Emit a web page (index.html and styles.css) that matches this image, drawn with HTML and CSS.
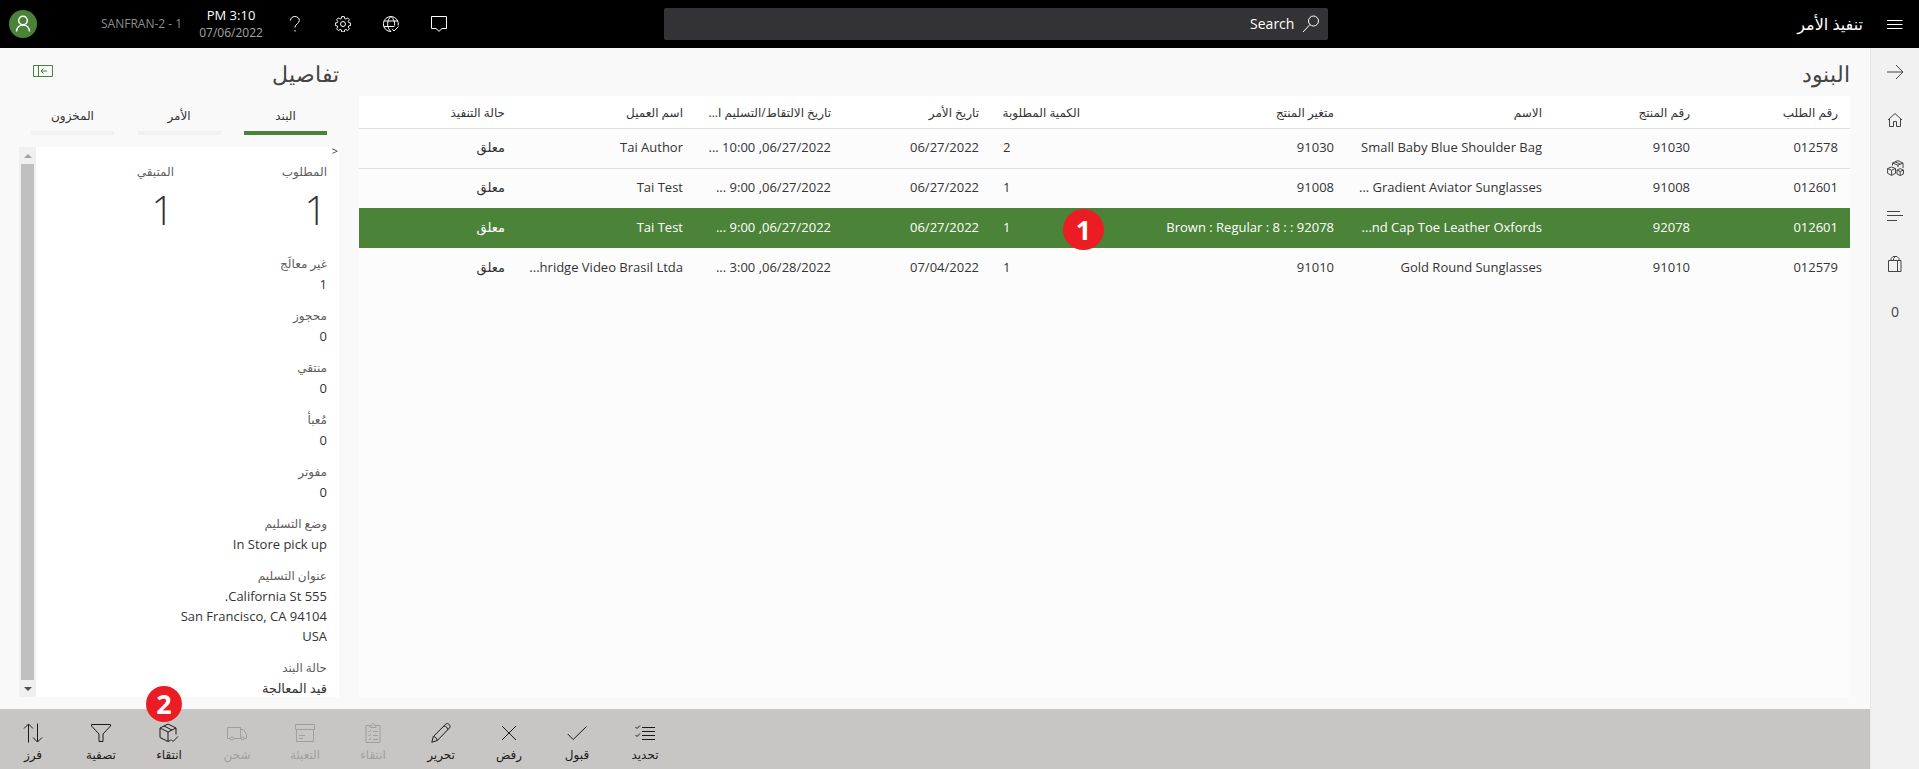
FILE: index.html
```html
<!DOCTYPE html>
<html lang="ar" dir="rtl">
<head>
<meta charset="utf-8">
<title>تنفيذ الأمر</title>
<link rel="stylesheet" href="styles.css">
</head>
<body>
<div class="app">
  <header class="topbar">
    <div class="topbar-start">
      <button class="icon-btn" type="button" aria-label="القائمة">
        <svg width="16" height="16" viewBox="0 0 16 16"><path d="M0 4.500h15.500M0 8.500h15.500M0 12.500h15.500"/></svg>
      </button>
      <h1 class="app-title">تنفيذ الأمر</h1>
    </div>
    <label class="search">
      <svg width="18" height="18" viewBox="0 0 18 18"><circle cx="11.500" cy="6" r="5"/><path d="M8 9.500L1 17"/></svg>
      <input class="search-input" type="text" placeholder="Search" aria-label="Search">
    </label>
    <div class="topbar-end">
      <button class="icon-btn" type="button" aria-label="الرسائل">
        <svg width="16" height="16" viewBox="0 0 16 16"><path d="M.5.5h15v12H11L8 15.300 5 12.500H.5z"/></svg>
      </button>
      <button class="icon-btn" type="button" aria-label="الاتصال">
        <svg width="16" height="16" viewBox="0 0 16 16"><path d="M15.200 9.500A7.500 7.500 0 1 0 8 15.500M8 .5C3.500 4 3.500 12 8 15.500M8 .5c3 2.500 4 6 3.500 9M1.200 5h13.600M.8 10.500h10.500M9 12.800l2 2.200 4.500-4.500"/></svg>
      </button>
      <button class="icon-btn" type="button" aria-label="الإعدادات">
        <svg width="16" height="16" viewBox="0 0 16 16"><circle cx="8" cy="8" r="2.500"/><path d="M6.700.6h2.600l.4 2 1.200.5 1.700-1.200 1.800 1.900-1.200 1.600.5 1.200 2 .4v2.500l-2 .4-.5 1.200 1.200 1.700-1.800 1.800-1.700-1.200-1.200.5-.4 2H6.700l-.4-2-1.200-.5-1.700 1.200-1.800-1.800 1.200-1.700-.5-1.200-2-.4V7l2-.4.5-1.200-1.200-1.600 1.800-1.900 1.700 1.200 1.200-.5z"/></svg>
      </button>
      <button class="icon-btn" type="button" aria-label="تعليمات">
        <svg width="16" height="16" viewBox="0 0 16 16"><path d="M3.500 4.500c0-2.300 1.800-4 4.300-4s4.500 1.500 4.500 4c0 3-4.300 3.500-4.300 7"/><path d="M8 14v1.600"/></svg>
      </button>
      <div class="clock"><span class="clock-time">3:10 PM</span><span class="clock-date">07/06/2022</span></div>
      <span class="register" dir="ltr">SANFRAN-2 - 1</span>
      <button class="avatar" type="button" aria-label="المستخدم">
        <svg width="16" height="18" viewBox="0 0 16 18"><circle cx="8" cy="5.500" r="4.300"/><path d="M1.500 16.500c.3-4 3-6.500 6.500-6.500s6.200 2.500 6.500 6.500"/></svg>
      </button>
    </div>
  </header>

  <div class="shell">
    <nav class="rail" aria-label="التنقل">
      <a class="rail-item" href="#" aria-label="رجوع"><svg width="17" height="16" viewBox="0 0 17 16"><path d="M0 8h16M9 1l7 7-7 7"/></svg></a>
      <a class="rail-item" href="#" aria-label="الصفحة الرئيسية"><svg width="16" height="16" viewBox="0 0 16 16"><path d="M1 8l7-6.500L15 8M2.500 7v7.500h4v-5h3v5h4V7"/></svg></a>
      <a class="rail-item" href="#" aria-label="المنتجات"><svg width="17" height="16" viewBox="0 0 17 16"><path d="M5.500 3L11 .6 16 3v5M11 5.200L5.500 3v2.500M16 3l-5 2.200v2M8 1.800l5.300 2.300M.6 8.500L4.600 7l3.900 1.500v4.800l-3.900 2.100-4-2.100zM.6 8.500l4 1.700 3.900-1.700M4.600 10.200v5.200M10 10l3.200-1.400L16.400 10v4l-3.200 1.500L10 14zM10 10l3.200 1.500 3.200-1.500M13.200 11.500v4"/></svg></a>
      <a class="rail-item" href="#" aria-label="القوائم"><svg width="16" height="16" viewBox="0 0 16 16"><path d="M0 3.500h13M0 7.500h16M0 12.500h10"/></svg></a>
      <a class="rail-item" href="#" aria-label="السلة"><svg width="14" height="16" viewBox="0 0 14 16"><path d="M.5 4.500h12.500v11H.5zM9.500 4.500v11M3 4.500v-2l2-2h4l2 2v2M5.500 4.500v-2l2-2"/></svg></a>
      <a class="rail-item rail-count" href="#">0</a>
    </nav>

    <div class="content">
      <div class="panes">
        <main class="lines">
          <h2 class="pane-title">البنود</h2>
          <div class="lines-panel">
            <table class="grid">
              <colgroup>
                <col class="c-id"><col class="c-id"><col class="c-name"><col class="c-variant"><col class="c-qty"><col class="c-id"><col class="c-id"><col class="c-customer"><col class="c-status">
              </colgroup>
              <thead>
                <tr><th>رقم الطلب</th><th>رقم المنتج</th><th>الاسم</th><th>متغير المنتج</th><th class="num">الكمية المطلوبة</th><th>تاريخ الأمر</th><th>تاريخ الالتقاط/التسليم ا...</th><th>اسم العميل</th><th>حالة التنفيذ</th></tr>
              </thead>
              <tbody>
                <tr><td>012578</td><td>91030</td><td>Small Baby Blue Shoulder Bag</td><td>91030</td><td class="num">2</td><td>06/27/2022</td><td>06/27/2022, 10:00 ...</td><td>Tai Author</td><td>معلق</td></tr>
                <tr><td>012601</td><td>91008</td><td>Gradient Aviator Sunglasses ...</td><td>91008</td><td class="num">1</td><td>06/27/2022</td><td>06/27/2022, 9:00 ...</td><td>Tai Test</td><td>معلق</td></tr>
                <tr class="selected"><td>012601</td><td>92078</td><td>nd Cap Toe Leather Oxfords...</td><td>92078 : : 8 : Brown : Regular</td><td class="num">1<span class="badge badge-row">1</span></td><td>06/27/2022</td><td>06/27/2022, 9:00 ...</td><td>Tai Test</td><td>معلق</td></tr>
                <tr><td>012579</td><td>91010</td><td>Gold Round Sunglasses</td><td>91010</td><td class="num">1</td><td>07/04/2022</td><td>06/28/2022, 3:00 ...</td><td>hridge Video Brasil Ltda...</td><td>معلق</td></tr>
              </tbody>
            </table>
          </div>
        </main>

        <aside class="details">
          <div class="details-head">
            <h2 class="pane-title">تفاصيل</h2>
            <button class="collapse" type="button" aria-label="طي">
              <svg width="20" height="12" viewBox="0 0 20 12"><path d="M.5.5h19v11H.5zM5.500.5v11M14 6H8M10.500 3.500L8 6l2.500 2.500"/></svg>
            </button>
          </div>
          <div class="tabs" role="tablist">
            <button class="tab active" role="tab" type="button">البند</button>
            <button class="tab" role="tab" type="button">الأمر</button>
            <button class="tab" role="tab" type="button">المخزون</button>
          </div>
          <div class="details-panel">
            <div class="fields">
              <span class="chevron">&lt;</span>
              <dl class="totals">
                <div class="total"><dt>المطلوب</dt><dd>1</dd></div>
                <div class="total"><dt>المتبقي</dt><dd>1</dd></div>
              </dl>
              <dl class="list">
                <div class="field"><dt>غير معالَج</dt><dd>1</dd></div>
                <div class="field"><dt>محجوز</dt><dd>0</dd></div>
                <div class="field"><dt>منتقي</dt><dd>0</dd></div>
                <div class="field"><dt>مُعبأ</dt><dd>0</dd></div>
                <div class="field"><dt>مفوتر</dt><dd>0</dd></div>
                <div class="field"><dt>وضع التسليم</dt><dd>In Store pick up</dd></div>
                <div class="field"><dt>عنوان التسليم</dt><dd>555 California St.<br>San Francisco, CA 94104<br>USA</dd></div>
                <div class="field"><dt>حالة البند</dt><dd>قيد المعالجة</dd></div>
              </dl>
            </div>
            <div class="scrollbar" aria-hidden="true">
              <span class="arrow arrow-up"></span>
              <span class="thumb"></span>
              <span class="arrow arrow-down"></span>
            </div>
          </div>
        </aside>
      </div>

      <footer class="commands">
        <button class="cmd" type="button"><svg width="20" height="20" viewBox="0 0 20 20"><path d="M7 4.500h13M7 8.500h13M7 12.500h13M7 16.500h13M.5 4l1.500 1.500L5 2.500M.5 12l1.500 1.500 3-3"/></svg><span>تحديد</span></button>
        <button class="cmd" type="button"><svg width="20" height="20" viewBox="0 0 20 20"><path d="M.7 11l5.500 5.500L19.500 3.500"/></svg><span>قبول</span></button>
        <button class="cmd" type="button"><svg width="20" height="20" viewBox="0 0 20 20"><path d="M3 3l14 14M17 3L3 17"/></svg><span>رفض</span></button>
        <button class="cmd" type="button"><svg width="20" height="20" viewBox="0 0 20 20"><path d="M.8 19.300l1.500-5.800L14.700 1.200c1-1 2.500-.7 3.500.3s1.200 2.500.2 3.500L6.300 17.500zM2.300 13.500c2 .2 3.500 1.700 4 4M13 3c2 .2 3.500 1.500 3.900 3.700"/></svg><span>تحرير</span></button>
        <button class="cmd" type="button" disabled><svg width="20" height="20" viewBox="0 0 20 20"><path d="M7 2.500H3v17h14v-17h-4M7 4.500v-2h1.500C8.500-.2 11.500-.2 11.500 2.500H13v2zM5.500 8l1 1 1.500-2M10 8.500h5M5.500 12l1 1 1.500-2M10 12.500h5M5.500 16l1 1 1.500-2M10 16.500h5"/></svg><span>انتقاء</span></button>
        <button class="cmd" type="button" disabled><svg width="20" height="20" viewBox="0 0 20 20"><path d="M.5 1.500h19v5H.5zM1.500 6.500v12h17v-12M4 12.500h6M4 15.500h4"/></svg><span>التعبئة</span></button>
        <button class="cmd" type="button" disabled><svg width="20" height="20" viewBox="0 0 20 20"><path d="M3 15.500H.5v-11h13v11H7M13.500 6.500h3l3 5v4h-2M12 15.500h2"/><circle cx="5" cy="15.500" r="1.500"/><circle cx="15.700" cy="15.500" r="1.500"/></svg><span>شحن</span></button>
        <button class="cmd" type="button"><svg width="20" height="20" viewBox="0 0 20 20"><path d="M17 11.500V5L9 1 1 5v9.500l8 4 2.500-1.200M1 5l8 4 8-4M9 9v9.500M5 3l8 4M12 16.500l2 2 5-5"/></svg><span>انتقاء</span><b class="badge badge-cmd">2</b></button>
        <button class="cmd" type="button"><svg width="20" height="20" viewBox="0 0 20 20"><path d="M.5 1.500h19v1.500L12 11v7.500H8V11L.5 3z"/></svg><span>تصفية</span></button>
        <button class="cmd" type="button"><svg width="20" height="20" viewBox="0 0 20 20"><path d="M5.500 19.500V1M1 5.500L5.500 1 10 5.500M14.500 .5V19M10 14.500l4.500 4.500 4.500-4.500"/></svg><span>فرز</span></button>
      </footer>
    </div>
  </div>
</div>
</body>
</html>
```
FILE: styles.css
```css
* { box-sizing: border-box; }

body {
  margin: 0;
  font-family: "Open Sans", "Noto Sans", "DejaVu Sans", sans-serif;
  font-size: 13px;
  line-height: 20px;
  color: #333;
  background: #faf9f9;
}

h1, h2, dl, dd { margin: 0; font-weight: inherit; }
button, input { font: inherit; color: inherit; }
button { padding: 0; border: 0; background: none; }
svg { display: block; flex: none; fill: none; stroke: currentColor; stroke-width: 1; }

.app { display: flex; flex-direction: column; min-height: 100vh; }

/* Top bar */
.topbar {
  display: grid;
  grid-template-columns: 8fr minmax(200px, 664px) 9fr;
  align-items: center;
  height: 48px;
  color: #fff;
  background: #000;
}
.topbar-start, .topbar-end { display: flex; align-items: center; }
.topbar-end { justify-content: flex-end; padding-left: 9px; }
.icon-btn { display: grid; place-items: center; width: 48px; height: 48px; }
.app-title { margin-right: 8px; font-size: 16px; }
.search {
  display: flex;
  align-items: center;
  gap: 8px;
  height: 32px;
  padding: 0 8px;
  border-radius: 2px;
  background: #333335;
}
.search-input { flex: 1; min-width: 0; padding: 0; border: 0; outline: 0; background: none; font-size: 14px; }
.search-input::placeholder { color: #fff; opacity: 1; }
.clock { display: flex; flex-direction: column; align-items: center; width: 80px; line-height: 18px; }
.clock-time { font-size: 13px; }
.clock-date { font-size: 12px; color: #a6a6a6; }
.register { width: 90px; margin: 0 0 0 64px; color: #8c8c8c; font-size: 12px; white-space: nowrap; }
.avatar { display: grid; place-items: center; width: 28px; height: 28px; border-radius: 50%; background: #4a8239; }
.avatar svg { stroke-width: 1.500; }

/* Shell */
.shell { display: flex; flex: 1; }
.rail { display: flex; flex-direction: column; flex: none; width: 49px; border-left: 1px solid #e8e7e7; background: #f2f1f2; }
.rail-item { display: grid; place-items: center; height: 48px; color: #444; text-decoration: none; font-size: 14px; }
.content { display: flex; flex: 1; flex-direction: column; min-width: 0; }
.panes { display: flex; flex: 1; gap: 20px; padding: 8px 20px 12px 19px; }
.pane-title { height: 40px; color: #444; font-size: 22px; font-weight: 300; line-height: 34px; }

/* Lines */
.lines { display: flex; flex: 1; flex-direction: column; min-width: 0; }
.lines-panel { flex: 1; background: #fdfcfd; }
.grid { width: 100%; border-collapse: collapse; table-layout: fixed; }
.c-id { width: 148px; }
.c-name { width: 208px; }
.c-variant { width: 254px; }
.c-qty { width: 101px; }
.c-customer { width: 178px; }
.c-status { width: 158px; }
.grid th, .grid td { padding: 0 12px; text-align: right; white-space: nowrap; font-weight: inherit; }
.grid th { height: 32px; padding-top: 2px; font-size: 12px; background: #fff; }
.grid td { height: 40px; padding-bottom: 2px; }
.grid tr { border-bottom: 1px solid #e1dfe0; }
.grid tbody tr:nth-child(n+2) { border-bottom: 0; }
.grid .num { position: relative; text-align: left; }
.selected { color: #fff; background: #4b8339; }

/* Details */
.details { display: flex; flex: none; flex-direction: column; width: 320px; }
.details-head { display: flex; justify-content: space-between; }
.collapse { align-self: flex-start; margin: 9px 0 0 14px; color: #4b8339; }
.tabs { display: flex; justify-content: space-between; height: 51px; padding: 8px 12px 12px; }
.tab { width: 83px; padding-bottom: 4px; border-bottom: 4px solid #f2f1f1; font-size: 12px; }
.tab.active { border-color: #4b8339; }
.details-panel { display: flex; flex: 1; background: #fff; }
.fields { position: relative; flex: 1; padding: 14px 12px 0 0; }
.chevron { position: absolute; top: -6px; right: 1px; font-size: 11px; }
dt { color: #605e5c; font-size: 12px; line-height: 21px; }
.totals { display: grid; grid-template-columns: 153px 1fr; height: 92px; }
.total dd { font-size: 40px; font-weight: 300; line-height: 56px; }
.list { display: flex; flex-direction: column; gap: 11px; margin-bottom: -4px; }
.scrollbar { display: flex; flex: none; flex-direction: column; align-items: center; width: 17px; background: #f1f0f1; }
.thumb { flex: 1; width: 13px; background: #c1c0c1; }
.arrow { display: grid; place-items: center; height: 17px; }
.arrow::before { content: ""; border: 4px solid transparent; }
.arrow-up::before { border-top: 0; border-bottom-color: #a3a3a3; }
.arrow-down::before { border-bottom: 0; border-top-color: #505050; }

/* Commands */
.commands { display: flex; justify-content: flex-end; height: 60px; color: #1b1a19; background: #c8c6c5; }
.cmd { position: relative; display: flex; flex-direction: column; align-items: center; gap: 2px; width: 68px; padding-top: 14px; font-size: 12px; }
.cmd:last-child { margin-left: -1px; }
.cmd:disabled { color: #a19f9d; }

/* Step markers */
.badge {
  position: absolute;
  display: grid;
  place-items: center;
  border-radius: 50%;
  color: #fff;
  background: #ec1c24;
  font-weight: 700;
  font-size: 27px;
}
.badge-row { top: 1px; right: -12px; width: 41px; height: 41px; }
.badge-cmd { top: -23px; left: 11px; width: 36px; height: 36px; }
```
